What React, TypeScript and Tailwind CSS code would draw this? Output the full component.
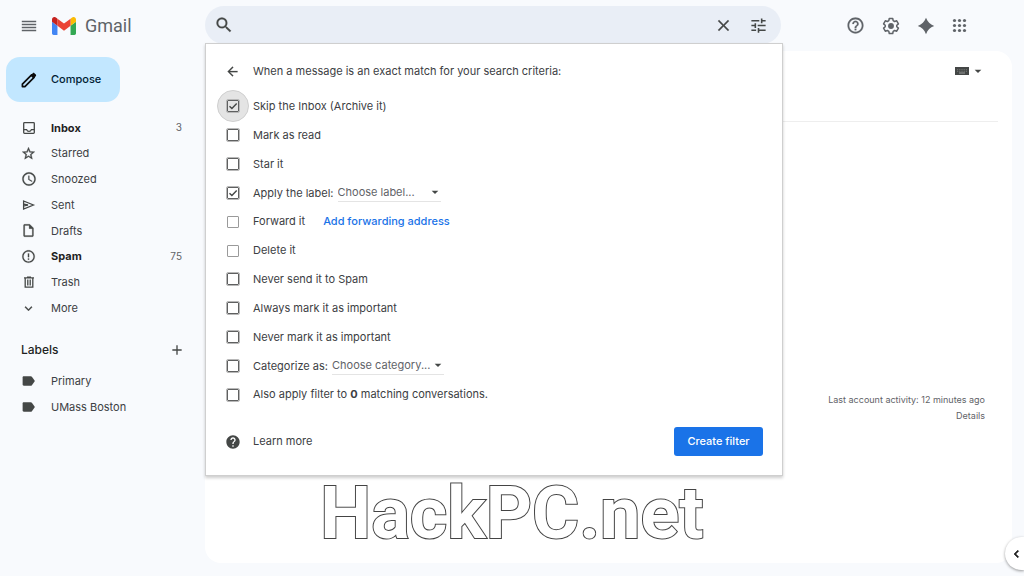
import type { ReactNode } from "react";
import {
  MdAccessTime,
  MdAdd,
  MdArrowBack,
  MdArrowDropDown,
  MdChevronLeft,
  MdClose,
  MdErrorOutline,
  MdExpandMore,
  MdHelp,
  MdHelpOutline,
  MdOutlineInsertDriveFile,
  MdSearch,
  MdStarBorder,
  MdTune,
} from "react-icons/md";

function GmailLogo() {
  return (
    <svg viewBox="52 42 88 66" className="h-[18px] w-6" aria-hidden="true">
      <path fill="#4285f4" d="M58 108h14V74L52 59v43c0 3.32 2.69 6 6 6" />
      <path fill="#34a853" d="M120 108h14c3.32 0 6-2.69 6-6V59l-20 15" />
      <path fill="#fbbc04" d="M120 48v26l20-15v-8c0-7.42-8.47-11.65-14.4-7.2" />
      <path fill="#ea4335" d="M72 74V48l24 18 24-18v26L96 92" />
      <path fill="#c5221f" d="M52 51v8l20 15V48l-5.6-4.2c-5.94-4.45-14.4-.22-14.4 7.2" />
    </svg>
  );
}

function MenuIcon() {
  return (
    <svg viewBox="0 0 16 16" className="size-4" stroke="#5f6368" strokeWidth="1.3" aria-hidden="true">
      <path d="M.8 3.5h14.4M.8 6.5h14.4M.8 9.5h14.4M.8 12.5h14.4" />
    </svg>
  );
}

function PencilIcon() {
  return (
    <svg viewBox="0 0 16 16" className="size-4" fill="none" stroke="#0b0b0b" strokeWidth="1.7" aria-hidden="true">
      <path d="M1.4 14.6v-2.5L10.6 2.9l2.5 2.5-9.2 9.2z" strokeLinejoin="round" />
      <path d="M9.4 3.6l2.4-2.4c.5-.5 1.1-.5 1.6 0l1.4 1.4c.5.5.5 1.1 0 1.6l-2.4 2.4z" fill="#0b0b0b" stroke="none" />
    </svg>
  );
}

function InboxIcon() {
  return (
    <svg viewBox="0 0 16 16" className="size-4" fill="none" stroke="currentColor" strokeWidth="1.3" aria-hidden="true">
      <rect x="2.7" y="2.7" width="10.6" height="10.6" rx="0.8" />
      <path d="M2.7 9.6h2.9c.4 1.2 1.3 1.8 2.4 1.8s2-.6 2.4-1.8h2.9" />
    </svg>
  );
}

function SentIcon() {
  return (
    <svg viewBox="0 0 16 16" className="size-4" fill="none" stroke="currentColor" strokeWidth="1.3" aria-hidden="true">
      <path d="M2.6 4L12.4 8 2.6 12z" />
      <path d="M2.6 7.2L7 8l-4.4.8" />
    </svg>
  );
}

function TrashIcon() {
  return (
    <svg viewBox="0 0 16 16" className="size-4" fill="none" stroke="currentColor" strokeWidth="1.3" aria-hidden="true">
      <path d="M3 3.8h10M6 3.2h4M4.2 3.8v9.4h7.6V3.8M6.8 5.6v5.8M9.2 5.6v5.8" />
    </svg>
  );
}

function LabelIcon() {
  return (
    <svg viewBox="0 0 16 16" className="size-4" fill="currentColor" aria-hidden="true">
      <path d="M2.8 3.2h6.9c.5 0 .9.2 1.2.6L13.9 8l-3 4.2c-.3.4-.7.6-1.2.6H2.8c-.7 0-1.2-.5-1.2-1.2V4.4c0-.7.5-1.2 1.2-1.2z" />
    </svg>
  );
}

function SettingsIcon() {
  return (
    <svg viewBox="0 0 24 24" className="size-[18px]" fill="none" stroke="currentColor" strokeWidth="2" aria-hidden="true">
      <path
        strokeLinejoin="round"
        d="M9.7 2h4.6l.6 2.9 1.9 1.1 2.8-.9 2.3 4-2.2 1.9v2l2.2 1.9-2.3 4-2.8-.9-1.9 1.1-.6 2.9H9.7l-.6-2.9L7.2 18l-2.8.9-2.3-4L4.3 13v-2L2.1 9.1l2.3-4 2.8.9 1.9-1.1z"
      />
      <circle cx="12" cy="12" r="3.9" fill="currentColor" stroke="none" />
    </svg>
  );
}

function SparkIcon() {
  return (
    <svg viewBox="0 0 18 18" className="size-[18px]" fill="currentColor" aria-hidden="true">
      <path d="M9 .8C10.6 5 13 7.4 17.2 9 13 10.6 10.6 13 9 17.2 7.4 13 5 10.6.8 9 5 7.4 7.4 5 9 .8z" />
    </svg>
  );
}

function AppsIcon() {
  const stops = [2.5, 7.5, 12.5];
  return (
    <svg viewBox="0 0 15 15" className="size-[15px]" fill="currentColor" aria-hidden="true">
      {stops.map((y) => stops.map((x) => <circle key={`${x}-${y}`} cx={x} cy={y} r="1.6" />))}
    </svg>
  );
}

function KeyboardIcon() {
  return (
    <svg viewBox="0 0 14 8" className="h-2 w-3.5" aria-hidden="true">
      <rect width="14" height="8" fill="#444746" />
      <path d="M2 2.7h10M2 4.3h10" stroke="#8a8c8b" strokeWidth="0.7" strokeDasharray="1 0.8" />
      <path d="M4 6h6" stroke="#b0b2b1" strokeWidth="0.8" />
    </svg>
  );
}

const folders: { name: string; icon: ReactNode; count?: number }[] = [
  { name: "Inbox", icon: <InboxIcon />, count: 3 },
  { name: "Starred", icon: <MdStarBorder size={15} className="stroke-[0.6]" /> },
  { name: "Snoozed", icon: <MdAccessTime size={16} className="stroke-[0.3]" /> },
  { name: "Sent", icon: <SentIcon /> },
  { name: "Drafts", icon: <MdOutlineInsertDriveFile size={15} className="stroke-[0.4]" /> },
  { name: "Spam", icon: <MdErrorOutline size={15} className="stroke-[0.3]" />, count: 75 },
  { name: "Trash", icon: <TrashIcon /> },
  { name: "More", icon: <MdExpandMore size={15} className="stroke-[0.3]" /> },
];

const labels = ["Primary", "UMass Boston"];

function NavRow({ icon, name, count }: { icon: ReactNode; name: string; count?: number }) {
  return (
    <a
      href="#"
      className={`flex items-center pr-[23px] pl-[21px] ${count ? "font-bold text-[#1f1f1f]" : "text-[#3c4043]"}`}
    >
      <span className="flex w-[30px] text-[#444746]">{icon}</span>
      <span className="flex-1">{name}</span>
      {count && <span className="text-[10px] font-normal text-[#5f6368]">{count}</span>}
    </a>
  );
}

function Sidebar() {
  return (
    <aside className="w-[205px] shrink-0 pt-[6px] text-[11px]">
      <button className="ml-[6px] flex h-[45px] w-[114px] items-center rounded-[14px] bg-[#c2e7ff] pl-[15px] font-medium text-[#001d35]">
        <span className="w-[30px]">
          <PencilIcon />
        </span>
        Compose
      </button>
      <nav className="mt-[13px] grid h-[206px] auto-rows-fr">
        {folders.map((f) => (
          <NavRow key={f.name} {...f} />
        ))}
      </nav>
      <div className="mt-[19px] flex h-[20px] items-center justify-between pr-5 pl-[21px]">
        <h2 className="text-[12px] font-medium text-[#1f1f1f]">Labels</h2>
        <button aria-label="Create new label" className="text-[#444746]">
          <MdAdd size={16} />
        </button>
      </div>
      <nav className="mt-2 grid h-[52px] auto-rows-fr">
        {labels.map((name) => (
          <NavRow key={name} name={name} icon={<LabelIcon />} />
        ))}
      </nav>
    </aside>
  );
}

function Check({
  id,
  checked,
  muted,
  focused,
}: {
  id: string;
  checked?: boolean;
  muted?: boolean;
  focused?: boolean;
}) {
  return (
    <span
      className={`-ml-2 grid size-8 shrink-0 place-items-center rounded-full ${focused ? "border border-[#cfcfcf] bg-[#e4e4e4]" : ""}`}
    >
      <input
        id={id}
        type="checkbox"
        defaultChecked={checked}
        disabled={muted}
        className={`peer col-start-1 row-start-1 size-3 appearance-none rounded-[1px] border ${
          muted ? "border-[#9a9a9a]" : "border-[#5f6060] outline-1 outline-[#b8b8b8]"
        }`}
      />
      <svg
        viewBox="0 0 12 12"
        className="pointer-events-none invisible col-start-1 row-start-1 size-3 peer-checked:visible"
        fill="none"
        stroke="#444746"
        strokeWidth="1.4"
        aria-hidden="true"
      >
        <path d="M2.5 6.2l2.4 2.4L9.7 3.5" />
      </svg>
    </span>
  );
}

function Picker({ label, width }: { label: string; width: string }) {
  return (
    <span className={`grid items-center border-b border-[#e4e4e4] ${width}`}>
      <select aria-label={label} className="col-start-1 row-start-1 appearance-none text-[#5f6368]">
        <option>{label}</option>
      </select>
      <MdArrowDropDown
        size={16}
        className="pointer-events-none col-start-1 row-start-1 -mr-0.5 justify-self-end text-[#444746]"
      />
    </span>
  );
}

function FilterRow({
  id,
  text,
  checked,
  muted,
  focused,
  children,
}: {
  id: string;
  text: ReactNode;
  checked?: boolean;
  muted?: boolean;
  focused?: boolean;
  children?: ReactNode;
}) {
  return (
    <div className="flex h-0 min-h-full items-center">
      <Check id={id} checked={checked} muted={muted} focused={focused} />
      <label htmlFor={id} className="ml-1 whitespace-nowrap">
        {text}
      </label>
      {children}
    </div>
  );
}

function FilterMenu() {
  return (
    <form
      onSubmit={(e) => e.preventDefault()}
      className="absolute top-[37px] left-0 z-10 w-full min-w-[578px] border border-[#cfcfcf] bg-white pt-[17px] pr-[19px] pb-[19px] pl-[19px] text-[11px] text-[#3c4043] shadow-[0_2px_3px_rgba(0,0,0,0.2)]"
    >
      <div className="flex h-5 items-center">
        <button type="button" aria-label="Back" className="w-7 text-[#444746]">
          <MdArrowBack size={15} className="stroke-[0.3]" />
        </button>
        <p>When a message is an exact match for your search criteria:</p>
      </div>
      <div className="mt-[11px] grid h-[317px] auto-rows-fr">
        <FilterRow id="archive" text="Skip the Inbox (Archive it)" checked focused />
        <FilterRow id="read" text="Mark as read" />
        <FilterRow id="star" text="Star it" />
        <FilterRow id="label" text="Apply the label:" checked>
          <span className="ml-1">
            <Picker label="Choose label..." width="w-[103px]" />
          </span>
        </FilterRow>
        <FilterRow id="forward" text="Forward it" muted>
          <a href="#" className="ml-[18px] font-medium text-[#1a73e8]">
            Add forwarding address
          </a>
        </FilterRow>
        <FilterRow id="delete" text="Delete it" muted />
        <FilterRow id="spam" text="Never send it to Spam" />
        <FilterRow id="important" text="Always mark it as important" />
        <FilterRow id="unimportant" text="Never mark it as important" />
        <FilterRow id="category" text="Categorize as:">
          <span className="ml-1">
            <Picker label="Choose category..." width="w-[112px]" />
          </span>
        </FilterRow>
        <FilterRow
          id="existing"
          text={
            <>
              Also apply filter to <b>0</b> matching conversations.
            </>
          }
        />
      </div>
      <div className="mt-[18px] flex items-center justify-between">
        <a href="#" className="flex items-center">
          <span className="w-7 text-[#444746]">
            <MdHelp size={16} />
          </span>
          Learn more
        </a>
        <button className="h-[29px] w-[89px] rounded-[3px] bg-[#1a73e8] font-medium whitespace-nowrap text-white">
          Create filter
        </button>
      </div>
    </form>
  );
}

function Header() {
  return (
    <header className="flex h-[51px] shrink-0">
      <div className="flex w-[205px] shrink-0 items-center pl-[21px]">
        <button aria-label="Main menu">
          <MenuIcon />
        </button>
        <a
          href="#"
          className="ml-[15px] flex items-center gap-[9px] font-['Roboto',sans-serif] text-[18px] text-[#5f6368]"
        >
          <GmailLogo />
          Gmail
        </a>
      </div>
      <div className="relative mt-[6px] h-[38px] max-w-[576px] flex-1">
        <div className="flex h-full items-center rounded-full bg-[#e9eef6] pr-[13px] pl-[9px] text-[#444746]">
          <button aria-label="Search">
            <MdSearch size={20} className="stroke-[0.3]" />
          </button>
          <input aria-label="Search mail" className="min-w-0 flex-1 px-3 text-xs outline-none" />
          <button aria-label="Clear search" className="mr-[16px]">
            <MdClose size={19} className="stroke-[0.3]" />
          </button>
          <button aria-label="Search options">
            <MdTune size={19} />
          </button>
        </div>
        <FilterMenu />
      </div>
      <div className="ml-auto flex items-center gap-[17px] pr-[57px] text-[#5f6368]">
        <button aria-label="Support">
          <MdHelpOutline size={19} className="stroke-[0.3]" />
        </button>
        <button aria-label="Settings">
          <SettingsIcon />
        </button>
        <button aria-label="Assistant">
          <SparkIcon />
        </button>
        <button aria-label="Apps">
          <AppsIcon />
        </button>
      </div>
    </header>
  );
}

export default function App() {
  return (
    <div className="relative flex min-h-screen flex-col overflow-hidden bg-[#f8fafd] font-['Inter','Roboto',sans-serif] [&_path[fill=none]]:stroke-none">
      <Header />
      <div className="flex flex-1">
        <Sidebar />
        <main className="mr-3 mb-[13px] flex-1 rounded-2xl bg-white pr-[14px] text-[#5f6368]">
          <div className="flex h-[71px] items-start justify-end border-b border-[#eeeeee] pt-3 pr-[12px]">
            <button aria-label="Input tools" className="flex items-center gap-px text-[#444746]">
              <KeyboardIcon />
              <MdArrowDropDown size={16} />
            </button>
          </div>
          <div className="mt-[270px] pr-[13px] text-right text-[9px] leading-4">
            <p>Last account activity: 12 minutes ago</p>
            <a href="#">Details</a>
          </div>
        </main>
      </div>
      <p className="pointer-events-none absolute inset-x-0 bottom-[18px] text-center font-['Roboto',sans-serif] text-[72px] leading-[88px] font-bold text-white [paint-order:stroke_fill] [-webkit-text-stroke:2px_#444444]">
        HackPC.net
      </p>
      <button
        aria-label="Show side panel"
        className="absolute right-0 bottom-[6px] flex h-[33px] w-[19px] items-center justify-center rounded-l-full bg-white pl-1 text-[#1f1f1f] shadow-[0_1px_3px_rgba(0,0,0,0.4)]"
      >
        <MdChevronLeft size={16} className="stroke-1" />
      </button>
    </div>
  );
}
